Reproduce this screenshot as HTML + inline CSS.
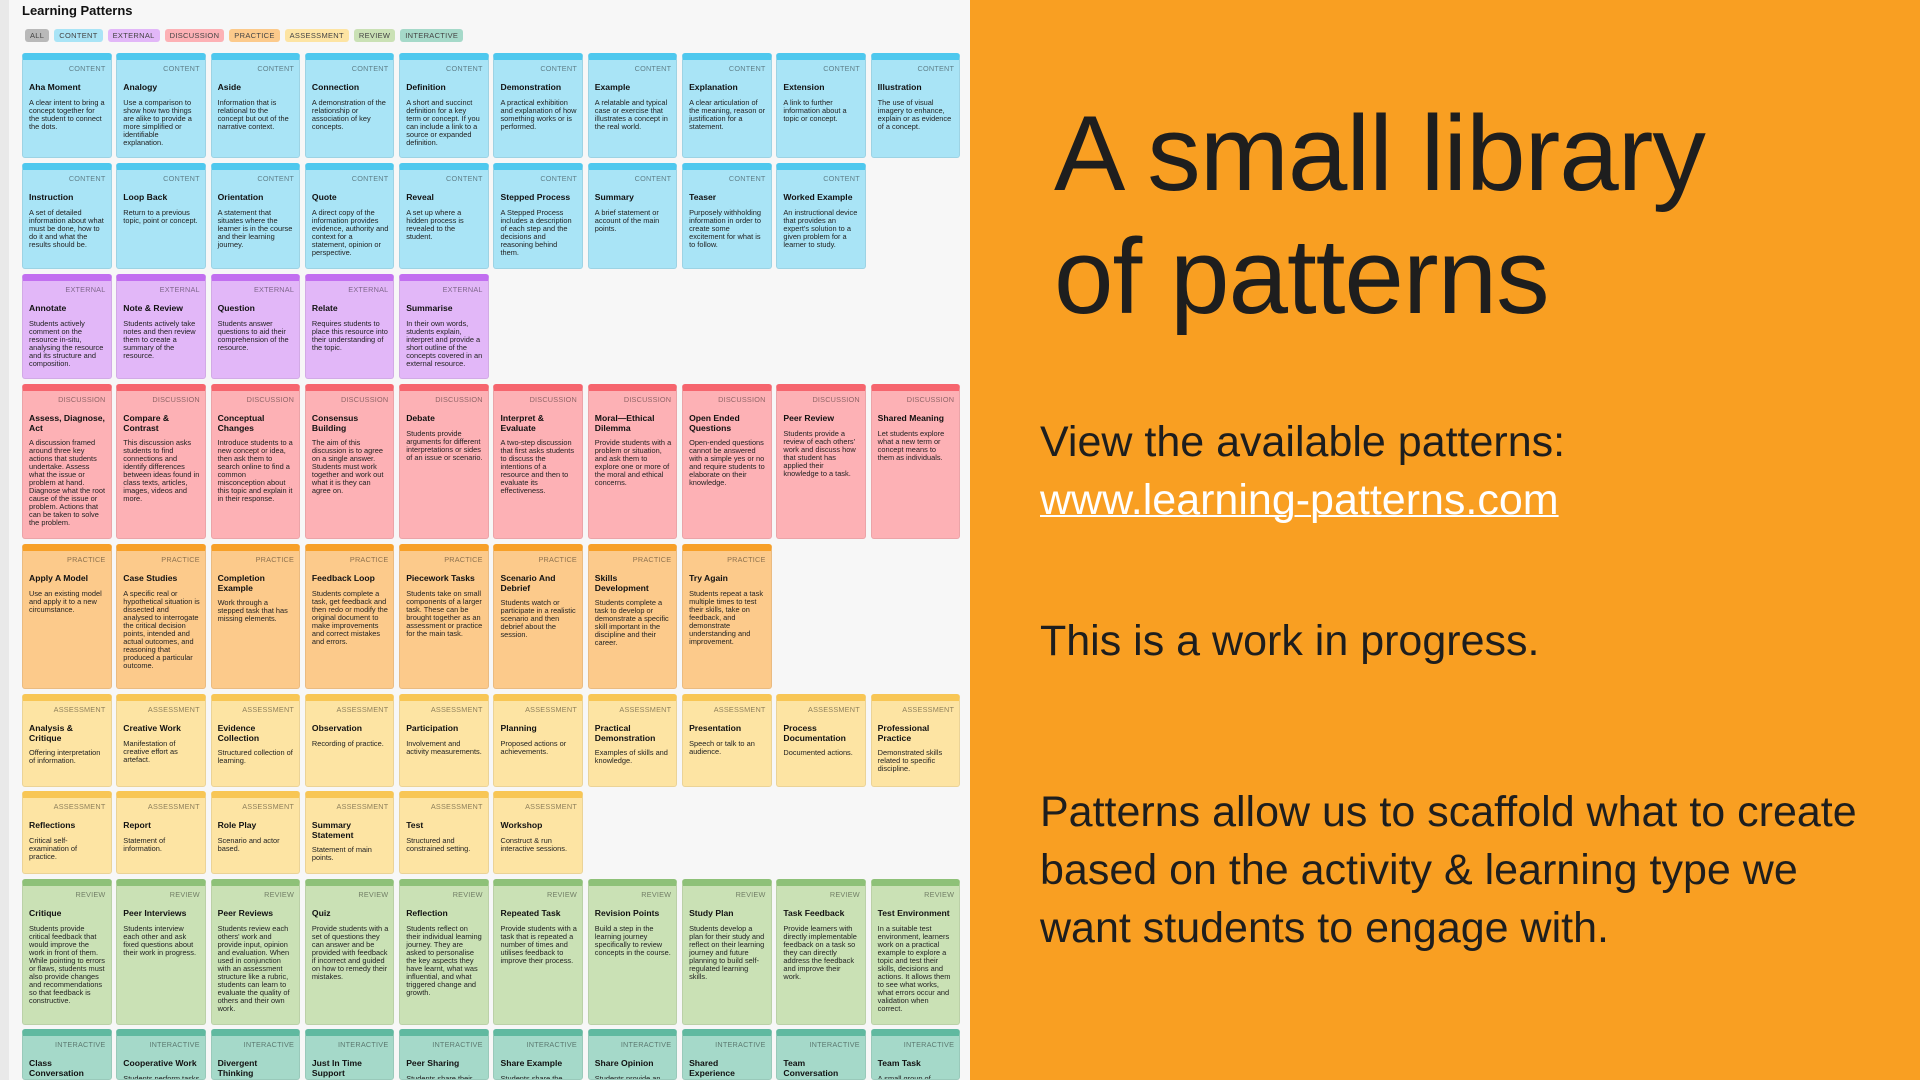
<!DOCTYPE html>
<html><head><meta charset="utf-8"><style>
*{margin:0;padding:0;box-sizing:border-box}
html,body{width:1920px;height:1080px;overflow:hidden}
body{font-family:"Liberation Sans",Arial,sans-serif;background:#f7f7f7;position:relative}
.strip{position:absolute;left:0;top:0;width:9px;height:1080px;background:#e9e9e9}
h1{position:absolute;left:22px;top:3px;font-size:13px;font-weight:bold;color:#111}
.pills{position:absolute;left:25px;top:29px;height:13px;display:flex}
.pills span{font-size:7.5px;line-height:13px;height:13px;padding:0 5px;border-radius:3px;margin-right:5px;letter-spacing:.3px;color:#444}
.row{position:absolute;left:22px;display:flex;overflow:hidden}
.c{width:89.5px;margin-right:4.8px;border-radius:3px;border:1px solid rgba(0,0,0,.07);border-top:7px solid;padding:4px 5px 0 6px;overflow:hidden;color:#111}
.c i{display:block;font-style:normal;text-align:right;font-size:7.3px;color:rgba(0,0,0,.45);letter-spacing:.2px;height:10px;line-height:10px;margin-bottom:9px}
.c b{display:block;font-size:8.6px;line-height:9.7px;margin-bottom:6px}
.c p{font-size:7.4px;line-height:8px;color:#222}
.k1{background:#a9e4f6;border-top-color:#4ec8ee}
.k2{background:#e2b7f8;border-top-color:#c26ff0}
.k3{background:#fdb1b5;border-top-color:#f6656e}
.k4{background:#fcca8b;border-top-color:#f7a028}
.k5{background:#fde4a3;border-top-color:#f8c655}
.k6{background:#cae1b5;border-top-color:#8ec178}
.k7{background:#a5d9c9;border-top-color:#60b9a0}
.right{position:absolute;left:970px;top:0;width:950px;height:1080px;background:#f99f22;color:#1e1e1e}
.big{position:absolute;left:84px;top:92px;font-size:107px;line-height:123px;white-space:nowrap;letter-spacing:-1px}
.t{position:absolute;left:70px;font-size:43px;white-space:nowrap}
.t a{color:#fff;text-decoration:underline;text-decoration-thickness:2px}
</style></head><body>
<div class="strip"></div>
<h1>Learning Patterns</h1>
<div class="pills">
<span style="background:#b9b9b9">ALL</span><span style="background:#a9e4f6">CONTENT</span><span style="background:#e2b7f8">EXTERNAL</span><span style="background:#fdb1b5">DISCUSSION</span><span style="background:#fcca8b">PRACTICE</span><span style="background:#fde4a3">ASSESSMENT</span><span style="background:#cae1b5">REVIEW</span><span style="background:#a5d9c9">INTERACTIVE</span>
</div>

<div class="row" style="top:53px;height:105px">
<div class="c k1"><i>CONTENT</i><b>Aha Moment</b><p>A clear intent to bring a concept together for the student to connect the dots.</p></div>
<div class="c k1"><i>CONTENT</i><b>Analogy</b><p>Use a comparison to show how two things are alike to provide a more simplified or identifiable explanation.</p></div>
<div class="c k1"><i>CONTENT</i><b>Aside</b><p>Information that is relational to the concept but out of the narrative context.</p></div>
<div class="c k1"><i>CONTENT</i><b>Connection</b><p>A demonstration of the relationship or association of key concepts.</p></div>
<div class="c k1"><i>CONTENT</i><b>Definition</b><p>A short and succinct definition for a key term or concept. If you can include a link to a source or expanded definition.</p></div>
<div class="c k1"><i>CONTENT</i><b>Demonstration</b><p>A practical exhibition and explanation of how something works or is performed.</p></div>
<div class="c k1"><i>CONTENT</i><b>Example</b><p>A relatable and typical case or exercise that illustrates a concept in the real world.</p></div>
<div class="c k1"><i>CONTENT</i><b>Explanation</b><p>A clear articulation of the meaning, reason or justification for a statement.</p></div>
<div class="c k1"><i>CONTENT</i><b>Extension</b><p>A link to further information about a topic or concept.</p></div>
<div class="c k1"><i>CONTENT</i><b>Illustration</b><p>The use of visual imagery to enhance, explain or as evidence of a concept.</p></div>
</div>

<div class="row" style="top:163px;height:106px">
<div class="c k1"><i>CONTENT</i><b>Instruction</b><p>A set of detailed information about what must be done, how to do it and what the results should be.</p></div>
<div class="c k1"><i>CONTENT</i><b>Loop Back</b><p>Return to a previous topic, point or concept.</p></div>
<div class="c k1"><i>CONTENT</i><b>Orientation</b><p>A statement that situates where the learner is in the course and their learning journey.</p></div>
<div class="c k1"><i>CONTENT</i><b>Quote</b><p>A direct copy of the information provides evidence, authority and context for a statement, opinion or perspective.</p></div>
<div class="c k1"><i>CONTENT</i><b>Reveal</b><p>A set up where a hidden process is revealed to the student.</p></div>
<div class="c k1"><i>CONTENT</i><b>Stepped Process</b><p>A Stepped Process includes a description of each step and the decisions and reasoning behind them.</p></div>
<div class="c k1"><i>CONTENT</i><b>Summary</b><p>A brief statement or account of the main points.</p></div>
<div class="c k1"><i>CONTENT</i><b>Teaser</b><p>Purposely withholding information in order to create some excitement for what is to follow.</p></div>
<div class="c k1"><i>CONTENT</i><b>Worked Example</b><p>An instructional device that provides an expert's solution to a given problem for a learner to study.</p></div>
</div>

<div class="row" style="top:274px;height:105px">
<div class="c k2"><i>EXTERNAL</i><b>Annotate</b><p>Students actively comment on the resource in-situ, analysing the resource and its structure and composition.</p></div>
<div class="c k2"><i>EXTERNAL</i><b>Note &amp; Review</b><p>Students actively take notes and then review them to create a summary of the resource.</p></div>
<div class="c k2"><i>EXTERNAL</i><b>Question</b><p>Students answer questions to aid their comprehension of the resource.</p></div>
<div class="c k2"><i>EXTERNAL</i><b>Relate</b><p>Requires students to place this resource into their understanding of the topic.</p></div>
<div class="c k2"><i>EXTERNAL</i><b>Summarise</b><p>In their own words, students explain, interpret and provide a short outline of the concepts covered in an external resource.</p></div>
</div>

<div class="row" style="top:384px;height:155px">
<div class="c k3"><i>DISCUSSION</i><b>Assess, Diagnose, Act</b><p>A discussion framed around three key actions that students undertake. Assess what the issue or problem at hand. Diagnose what the root cause of the issue or problem. Actions that can be taken to solve the problem.</p></div>
<div class="c k3"><i>DISCUSSION</i><b>Compare &amp; Contrast</b><p>This discussion asks students to find connections and identify differences between ideas found in class texts, articles, images, videos and more.</p></div>
<div class="c k3"><i>DISCUSSION</i><b>Conceptual Changes</b><p>Introduce students to a new concept or idea, then ask them to search online to find a common misconception about this topic and explain it in their response.</p></div>
<div class="c k3"><i>DISCUSSION</i><b>Consensus Building</b><p>The aim of this discussion is to agree on a single answer. Students must work together and work out what it is they can agree on.</p></div>
<div class="c k3"><i>DISCUSSION</i><b>Debate</b><p>Students provide arguments for different interpretations or sides of an issue or scenario.</p></div>
<div class="c k3"><i>DISCUSSION</i><b>Interpret &amp; Evaluate</b><p>A two-step discussion that first asks students to discuss the intentions of a resource and then to evaluate its effectiveness.</p></div>
<div class="c k3"><i>DISCUSSION</i><b>Moral—Ethical Dilemma</b><p>Provide students with a problem or situation, and ask them to explore one or more of the moral and ethical concerns.</p></div>
<div class="c k3"><i>DISCUSSION</i><b>Open Ended Questions</b><p>Open-ended questions cannot be answered with a simple yes or no and require students to elaborate on their knowledge.</p></div>
<div class="c k3"><i>DISCUSSION</i><b>Peer Review</b><p>Students provide a review of each others' work and discuss how that student has applied their knowledge to a task.</p></div>
<div class="c k3"><i>DISCUSSION</i><b>Shared Meaning</b><p>Let students explore what a new term or concept means to them as individuals.</p></div>
</div>

<div class="row" style="top:544px;height:145px">
<div class="c k4"><i>PRACTICE</i><b>Apply A Model</b><p>Use an existing model and apply it to a new circumstance.</p></div>
<div class="c k4"><i>PRACTICE</i><b>Case Studies</b><p>A specific real or hypothetical situation is dissected and analysed to interrogate the critical decision points, intended and actual outcomes, and reasoning that produced a particular outcome.</p></div>
<div class="c k4"><i>PRACTICE</i><b>Completion Example</b><p>Work through a stepped task that has missing elements.</p></div>
<div class="c k4"><i>PRACTICE</i><b>Feedback Loop</b><p>Students complete a task, get feedback and then redo or modify the original document to make improvements and correct mistakes and errors.</p></div>
<div class="c k4"><i>PRACTICE</i><b>Piecework Tasks</b><p>Students take on small components of a larger task. These can be brought together as an assessment or practice for the main task.</p></div>
<div class="c k4"><i>PRACTICE</i><b>Scenario And Debrief</b><p>Students watch or participate in a realistic scenario and then debrief about the session.</p></div>
<div class="c k4"><i>PRACTICE</i><b>Skills Development</b><p>Students complete a task to develop or demonstrate a specific skill important in the discipline and their career.</p></div>
<div class="c k4"><i>PRACTICE</i><b>Try Again</b><p>Students repeat a task multiple times to test their skills, take on feedback, and demonstrate understanding and improvement.</p></div>
</div>

<div class="row" style="top:694px;height:93px">
<div class="c k5"><i>ASSESSMENT</i><b>Analysis &amp; Critique</b><p>Offering interpretation of information.</p></div>
<div class="c k5"><i>ASSESSMENT</i><b>Creative Work</b><p>Manifestation of creative effort as artefact.</p></div>
<div class="c k5"><i>ASSESSMENT</i><b>Evidence Collection</b><p>Structured collection of learning.</p></div>
<div class="c k5"><i>ASSESSMENT</i><b>Observation</b><p>Recording of practice.</p></div>
<div class="c k5"><i>ASSESSMENT</i><b>Participation</b><p>Involvement and activity measurements.</p></div>
<div class="c k5"><i>ASSESSMENT</i><b>Planning</b><p>Proposed actions or achievements.</p></div>
<div class="c k5"><i>ASSESSMENT</i><b>Practical Demonstration</b><p>Examples of skills and knowledge.</p></div>
<div class="c k5"><i>ASSESSMENT</i><b>Presentation</b><p>Speech or talk to an audience.</p></div>
<div class="c k5"><i>ASSESSMENT</i><b>Process Documentation</b><p>Documented actions.</p></div>
<div class="c k5"><i>ASSESSMENT</i><b>Professional Practice</b><p>Demonstrated skills related to specific discipline.</p></div>
</div>

<div class="row" style="top:791px;height:83px">
<div class="c k5"><i>ASSESSMENT</i><b>Reflections</b><p>Critical self-examination of practice.</p></div>
<div class="c k5"><i>ASSESSMENT</i><b>Report</b><p>Statement of information.</p></div>
<div class="c k5"><i>ASSESSMENT</i><b>Role Play</b><p>Scenario and actor based.</p></div>
<div class="c k5"><i>ASSESSMENT</i><b>Summary Statement</b><p>Statement of main points.</p></div>
<div class="c k5"><i>ASSESSMENT</i><b>Test</b><p>Structured and constrained setting.</p></div>
<div class="c k5"><i>ASSESSMENT</i><b>Workshop</b><p>Construct &amp; run interactive sessions.</p></div>
</div>

<div class="row" style="top:879px;height:146px">
<div class="c k6"><i>REVIEW</i><b>Critique</b><p>Students provide critical feedback that would improve the work in front of them. While pointing to errors or flaws, students must also provide changes and recommendations so that feedback is constructive.</p></div>
<div class="c k6"><i>REVIEW</i><b>Peer Interviews</b><p>Students interview each other and ask fixed questions about their work in progress.</p></div>
<div class="c k6"><i>REVIEW</i><b>Peer Reviews</b><p>Students review each others' work and provide input, opinion and evaluation. When used in conjunction with an assessment structure like a rubric, students can learn to evaluate the quality of others and their own work.</p></div>
<div class="c k6"><i>REVIEW</i><b>Quiz</b><p>Provide students with a set of questions they can answer and be provided with feedback if incorrect and guided on how to remedy their mistakes.</p></div>
<div class="c k6"><i>REVIEW</i><b>Reflection</b><p>Students reflect on their individual learning journey. They are asked to personalise the key aspects they have learnt, what was influential, and what triggered change and growth.</p></div>
<div class="c k6"><i>REVIEW</i><b>Repeated Task</b><p>Provide students with a task that is repeated a number of times and utilises feedback to improve their process.</p></div>
<div class="c k6"><i>REVIEW</i><b>Revision Points</b><p>Build a step in the learning journey specifically to review concepts in the course.</p></div>
<div class="c k6"><i>REVIEW</i><b>Study Plan</b><p>Students develop a plan for their study and reflect on their learning journey and future planning to build self-regulated learning skills.</p></div>
<div class="c k6"><i>REVIEW</i><b>Task Feedback</b><p>Provide learners with directly implementable feedback on a task so they can directly address the feedback and improve their work.</p></div>
<div class="c k6"><i>REVIEW</i><b>Test Environment</b><p>In a suitable test environment, learners work on a practical example to explore a topic and test their skills, decisions and actions. It allows them to see what works, what errors occur and validation when correct.</p></div>
</div>

<div class="row" style="top:1029px;height:51px">
<div class="c k7"><i>INTERACTIVE</i><b>Class Conversation</b><p>Students discuss a topic as a class.</p></div>
<div class="c k7"><i>INTERACTIVE</i><b>Cooperative Work</b><p>Students perform tasks together.</p></div>
<div class="c k7"><i>INTERACTIVE</i><b>Divergent Thinking</b><p>Students work on ideas.</p></div>
<div class="c k7"><i>INTERACTIVE</i><b>Just In Time Support</b><p>Support when needed.</p></div>
<div class="c k7"><i>INTERACTIVE</i><b>Peer Sharing</b><p>Students share their work.</p></div>
<div class="c k7"><i>INTERACTIVE</i><b>Share Example</b><p>Students share the example.</p></div>
<div class="c k7"><i>INTERACTIVE</i><b>Share Opinion</b><p>Students provide an opinion.</p></div>
<div class="c k7"><i>INTERACTIVE</i><b>Shared Experience</b><p>Students share how a task went.</p></div>
<div class="c k7"><i>INTERACTIVE</i><b>Team Conversation</b><p>Teams discuss.</p></div>
<div class="c k7"><i>INTERACTIVE</i><b>Team Task</b><p>A small group of students.</p></div>
</div>

<div class="right">
<div class="big">A small library<br>of patterns</div>
<div class="t" style="top:418px">View the available patterns:</div>
<div class="t" style="top:476px"><a>www.learning-patterns.com</a></div>
<div class="t" style="top:617px">This is a work in progress.</div>
<div class="t" style="top:783px;line-height:58px">Patterns allow us to scaffold what to create<br>based on the activity &amp; learning type we<br>want students to engage with.</div>
</div>
</body></html>
